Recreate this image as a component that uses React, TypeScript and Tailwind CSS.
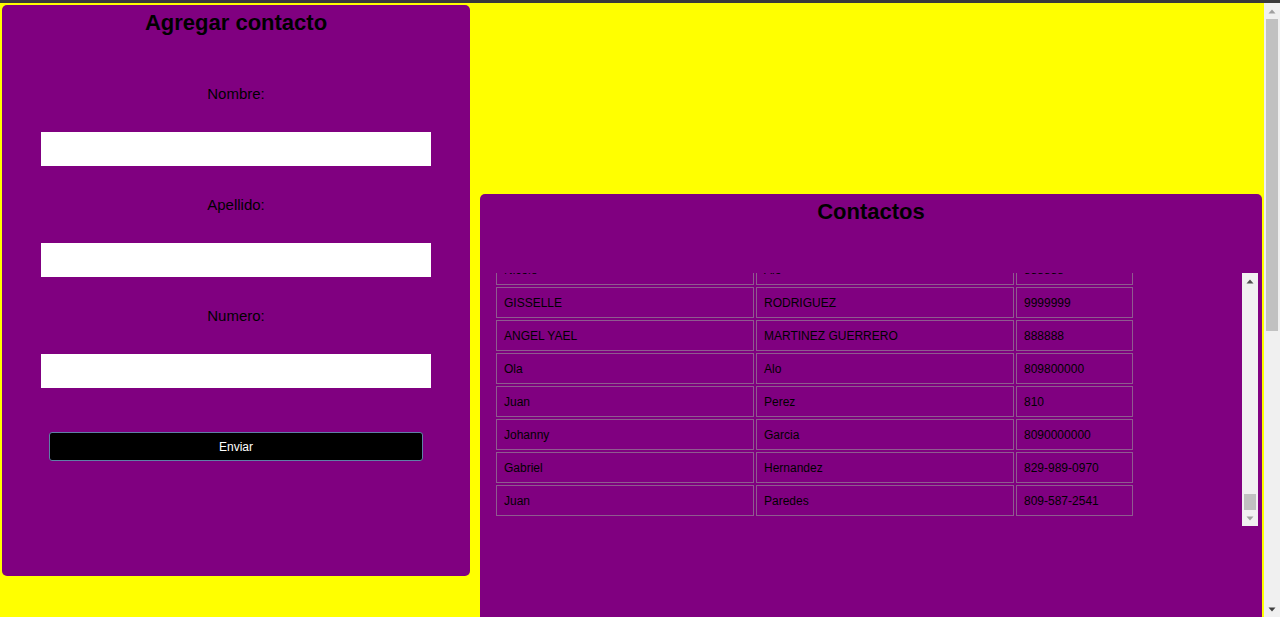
const contacts = [
  ["Nicole", "Alo", "888888"],
  ["GISSELLE", "RODRIGUEZ", "9999999"],
  ["ANGEL YAEL", "MARTINEZ GUERRERO", "888888"],
  ["Ola", "Alo", "809800000"],
  ["Juan", "Perez", "810"],
  ["Johanny", "Garcia", "8090000000"],
  ["Gabriel", "Hernandez", "829-989-0970"],
  ["Juan", "Paredes", "809-587-2541"],
];

function Arrow({ down = false, className }: { down?: boolean; className: string }) {
  return (
    <svg viewBox="0 0 16 16" className={`size-4 shrink-0 ${className}`} aria-hidden="true">
      <path d={down ? "M4.5 6.5h7L8 10.5z" : "M4.5 10.5h7L8 6.5z"} fill="currentColor" />
    </svg>
  );
}

function Field({ id, label }: { id: string; label: string }) {
  return (
    <div className="flex w-full flex-col items-center">
      <label htmlFor={id} className="text-[15px] leading-5">
        {label}
      </label>
      <input id={id} type="text" className="mt-7 h-[34px] w-5/6 bg-white px-2 text-black outline-none" />
    </div>
  );
}

export default function App() {
  return (
    <div className="flex h-screen flex-col overflow-hidden bg-[#ffff00] font-['Liberation_Sans',Arial,sans-serif] text-black">
      <div className="h-[3px] shrink-0 bg-[#3a3a3a]" />
      <div className="flex min-h-0 flex-1">
        <main className="grid min-w-0 flex-1 grid-cols-[234fr_391fr] items-start gap-x-[10px] overflow-hidden px-[2px] pt-[2px]">
          <section className="rounded-[5px] bg-[#800080] pb-[115px]">
            <h1 className="pt-1 text-center text-[22px] leading-7 font-bold">Agregar contacto</h1>
            <form className="flex flex-col items-center pt-[47px]" onSubmit={(e) => e.preventDefault()}>
              <div className="flex w-full flex-col gap-[29px]">
                <Field id="nombre" label="Nombre:" />
                <Field id="apellido" label="Apellido:" />
                <Field id="numero" label="Numero:" />
              </div>
              <button
                type="submit"
                className="mt-11 h-[29px] w-4/5 rounded-[3px] border border-[#5f7fa6] bg-black text-[12px] text-white"
              >
                Enviar
              </button>
            </form>
          </section>

          <section className="mt-[189px] rounded-[5px] bg-[#800080] pb-[160px]">
            <h2 className="pt-1 text-center text-[22px] leading-7 font-bold">Contactos</h2>
            <div className="mt-[47px] flex h-[253px] pr-1 pl-[14px]">
              <div className="flex min-w-0 flex-1 flex-col justify-end overflow-hidden pb-2">
                <table className="w-[641px] table-fixed border-separate border-spacing-[2px] text-left text-[12px] leading-[15px]">
                  <colgroup>
                    <col className="w-[258px]" />
                    <col className="w-[258px]" />
                    <col className="w-[117px]" />
                  </colgroup>
                  <tbody>
                    {contacts.map((row, i) => (
                      <tr key={i}>
                        {row.map((cell, j) => (
                          <td key={j} className="border border-[#8f5a8f] px-[7px] pt-2 pb-[6px]">
                            {cell}
                          </td>
                        ))}
                      </tr>
                    ))}
                  </tbody>
                </table>
              </div>
              <div className="flex w-4 shrink-0 flex-col bg-[#f1f0f1]">
                <Arrow className="text-[#505050]" />
                <div className="flex-1" />
                <div className="mx-[2px] h-4 bg-[#c1c1c1]" />
                <Arrow down className="text-[#a0a0a0]" />
              </div>
            </div>
          </section>
        </main>
        <div className="flex w-4 shrink-0 flex-col bg-[#f0f0f0]">
          <Arrow className="text-[#a0a0a0]" />
          <div className="mx-[2px] h-[312px] bg-[#c1c1c1]" />
          <div className="flex-1" />
          <Arrow down className="text-[#404040]" />
        </div>
      </div>
    </div>
  );
}
